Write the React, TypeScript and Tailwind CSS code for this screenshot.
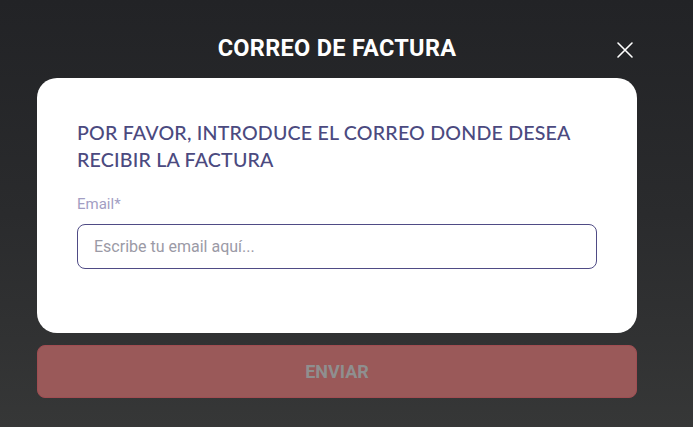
import React, { useState } from "react";

function CloseIcon() {
    return (
        <svg width="18" height="18" viewBox="0 0 18 18" fill="none">
            <path d="M2 2L16 16M16 2L2 16" stroke="#ffffff" strokeWidth="1.6" strokeLinecap="round" />
        </svg>
    );
}

export default function App() {
    const [email, setEmail] = useState("");

    return (
        <main className="w-[693px] h-[427px] overflow-hidden bg-gradient-to-b from-[#222326] via-[#2a2b2d] to-[#363737] font-['Roboto',sans-serif]">
            <section className="w-[600px] ml-[37px] flex flex-col">
                <div className="relative h-[78px] flex items-center justify-center pt-[20px]">
                    <h1 className="text-white text-[23.5px] font-bold tracking-[0.3px]">CORREO DE FACTURA</h1>
                    <button className="absolute right-[3px] top-[41px]">
                        <CloseIcon />
                    </button>
                </div>

                <div className="bg-white rounded-[20px] h-[255px] px-[40px] pt-[41px]">
                    <h2 className="text-[#4b4a7f] text-[19.6px] leading-[27px] font-['Lato',sans-serif] font-medium tracking-[0.2px]">
                        POR FAVOR, INTRODUCE EL CORREO DONDE DESEA
                        <br />
                        RECIBIR LA FACTURA
                    </h2>

                    <label htmlFor="email" className="block mt-[21px] text-[15px] leading-[20px] text-[#a29ec3]">
                        Email*
                    </label>
                    <input
                        id="email"
                        type="text"
                        value={email}
                        onChange={(e) => setEmail(e.target.value)}
                        placeholder="Escribe tu email aquí..."
                        className="mt-[10px] w-full h-[45px] border border-[#4f4b85] rounded-[8px] pl-[16px] text-[16px] text-[#333] placeholder:text-[#9b9aa6] outline-none"
                    />
                </div>

                <button className="mt-[12px] h-[53px] w-full rounded-[8px] bg-[#9a5959] border border-[#a04d52] text-[#8f8f8f] text-[18px] font-bold">
                    ENVIAR
                </button>
            </section>
        </main>
    );
}
